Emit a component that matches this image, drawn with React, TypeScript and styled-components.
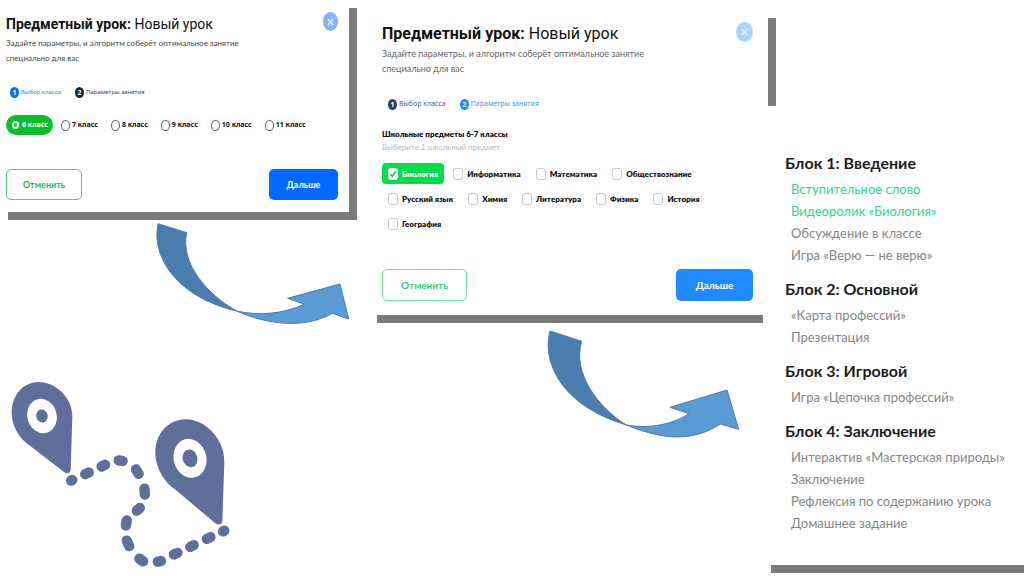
import React from 'react';
import styled, { createGlobalStyle } from 'styled-components';

const GlobalStyle = createGlobalStyle`
  *, *::before, *::after { box-sizing: border-box; }
  body { margin: 0; background: #fff; color: #111; font-family: Lato, "Liberation Sans", sans-serif; }
  h1, h2, p, ol, ul, fieldset { margin: 0; padding: 0; border: 0; list-style: none; }
  button, input { font-family: inherit; margin: 0; }
`;

type Size = { $large?: boolean };

const Slide = styled.main`
  display: grid;
  grid-template-columns: 369fr 394fr 261fr;
  align-items: start;
`;

const Column = styled.div`
  display: flex;
  flex-direction: column;
  min-width: 0;
`;

const Dialog = styled.section<Size>`
  display: flex;
  flex-direction: column;
  margin: ${p => (p.$large ? '10px -5px 0 0' : '0 20px 0 0')};
  padding: ${p => (p.$large ? '12px 15px 14px 13px' : '12px 11px 12px 6px')};
  background: #fff;
  box-shadow: 8px 8px 0 #7b7b7b;
`;

const DialogHead = styled.header`
  display: flex;
  justify-content: space-between;
  align-items: flex-start;
`;

const Title = styled.h1<Size>`
  font: 700 ${p => (p.$large ? 16 : 14)}px/24px Roboto, sans-serif;
  white-space: nowrap;
  span { font-weight: 400; }
`;

const CloseButton = styled.button<Size>`
  display: grid;
  place-items: center;
  width: ${p => (p.$large ? 17 : 15)}px;
  height: ${p => (p.$large ? 20 : 19)}px;
  padding: 0;
  border: 0;
  border-radius: 50%;
  background: ${p => (p.$large ? '#a6d7fb' : '#84b5fb')};
`;

const Lead = styled.p<Size>`
  max-width: ${p => (p.$large ? 280 : 250)}px;
  color: ${p => (p.$large ? '#666' : '#444')};
  font-size: ${p => (p.$large ? 9 : 8)}px;
  line-height: 15px;
`;

const Steps = styled.ol<Size>`
  display: flex;
  gap: 14px;
  margin-top: ${p => (p.$large ? 20 : 18)}px;
  padding-left: ${p => (p.$large ? 6 : 4)}px;
`;

const Step = styled.li<Size & { $color: string }>`
  display: flex;
  align-items: center;
  gap: 2px;
  height: 16px;
  color: ${p => p.$color};
  font: 400 ${p => (p.$large ? 7 : 6)}px/16px "Noto Sans", sans-serif;
  white-space: nowrap;
`;

const StepNumber = styled.span<{ $color: string }>`
  display: grid;
  place-items: center;
  width: 9px;
  height: 11px;
  border-radius: 50%;
  background: ${p => p.$color};
  color: #fff;
  font-weight: 700;
  font-size: 7px;
  line-height: 11px;
`;

const ClassList = styled.fieldset`
  display: flex;
  gap: 3px;
  margin-top: 15px;
`;

const ClassOption = styled.label`
  display: flex;
  align-items: center;
  gap: 2px;
  height: 20px;
  padding: 0 5px;
  border-radius: 10px;
  background: #fbfdff;
  font: 700 7px/20px "Noto Sans", sans-serif;
  white-space: nowrap;
  &:has(input:checked) { background: #0abf2c; color: #fff; }
`;

const Radio = styled.input`
  appearance: none;
  width: 9px;
  height: 11px;
  border: 1px solid #56616e;
  border-radius: 50%;
  background: #fff;
  &:checked {
    width: 7px;
    height: 8px;
    margin: 0 1px;
    border: 2px solid #fff;
    background: #0abf2c;
  }
`;

const GroupTitle = styled.h2`
  margin-top: 14px;
  font-size: 8px;
  font-weight: 800;
  line-height: 16px;
`;

const GroupHint = styled.p`
  color: #b9b9b9;
  font-size: 8px;
  line-height: 10px;
`;

const SubjectList = styled.fieldset`
  display: flex;
  flex-wrap: wrap;
  gap: 4px 3px;
  margin-top: 11px;
`;

const Subject = styled.label`
  display: flex;
  align-items: center;
  gap: 4px;
  height: 21px;
  padding: 0 6px;
  border-radius: 4px;
  font-size: 8px;
  font-weight: 800;
  white-space: nowrap;
  &:has(input:checked) { background: #07dc4c; color: #fff; }
`;

const Tick = styled.span`
  display: grid;
  place-items: center;
  input, svg { grid-area: 1 / 1; }
  svg { pointer-events: none; }
`;

const Checkbox = styled.input`
  appearance: none;
  width: 10px;
  height: 12px;
  border: 1px solid #c4c9d2;
  border-radius: 3px;
  background: #fff;
  &:checked { border-color: #fff; }
`;

const Actions = styled.footer<Size>`
  display: flex;
  justify-content: space-between;
  margin-top: ${p => (p.$large ? 35 : 34)}px;
`;

const ActionButton = styled.button<Size & { $primary?: boolean }>`
  width: ${p => (p.$primary ? (p.$large ? 77 : 69) : p.$large ? 85 : 76)}px;
  height: ${p => (p.$large ? 32 : 31)}px;
  padding: 0;
  border: ${p => (p.$primary ? '0' : `1px solid ${p.$large ? '#6fe3a4' : '#5cc58a'}`)};
  border-radius: 5px;
  background: ${p => (p.$primary ? (p.$large ? '#1f8bff' : '#0069ff') : '#fff')};
  color: ${p => (p.$primary ? '#fff' : p.$large ? '#18cf68' : '#12b04a')};
  font-size: ${p => (p.$large ? 10 : 9)}px;
  font-weight: ${p => (p.$primary ? 700 : 600)};
`;

const Arrow = styled.svg<Size>`
  align-self: flex-end;
  margin: ${p => (p.$large ? '10px 23px 0 0' : '8px 19px 0 0')};
`;

const Route = styled.svg`
  margin-top: 44px;
`;

const Plan = styled.aside`
  display: flex;
  flex-direction: column;
  gap: 12px;
  margin-top: 106px;
  padding: 46px 0 31px 22px;
  background: #fff;
  box-shadow: 8px 8px 0 #7b7b7b;
`;

const PlanTitle = styled.h2`
  margin-bottom: 4px;
  color: #1c1c1c;
  font-size: 16px;
  font-weight: 700;
  line-height: 22px;
`;

const PlanItem = styled.li<{ $done?: boolean }>`
  padding-left: 6px;
  color: ${p => (p.$done ? '#2bd992' : '#858585')};
  font-size: 13px;
  line-height: 22px;
  white-space: nowrap;
`;

const Cross = () => (
  <svg width="7" height="8" viewBox="0 0 7 8" fill="none" stroke="#fff" strokeWidth="1.2" aria-hidden="true">
    <path d="M.7 .8 6.3 7.2M6.3 .8.7 7.2" />
  </svg>
);

const steps = ['Выбор класса', 'Параметры занятия'];
const classes = [6, 7, 8, 9, 10, 11];
const subjects = ['Биология', 'Информатика', 'Математика', 'Обществознание', 'Русский язык', 'Химия', 'Литература', 'Физика', 'История', 'География'];
const plan = [
  { title: 'Блок 1: Введение', done: 2, items: ['Вступительное слово', 'Видеоролик «Биология»', 'Обсуждение в классе', 'Игра «Верю — не верю»'] },
  { title: 'Блок 2: Основной', done: 0, items: ['«Карта профессий»', 'Презентация'] },
  { title: 'Блок 3: Игровой', done: 0, items: ['Игра «Цепочка профессий»'] },
  { title: 'Блок 4: Заключение', done: 0, items: ['Интерактив «Мастерская природы»', 'Заключение', 'Рефлексия по содержанию урока', 'Домашнее задание'] },
];

// Centre, half length and angle of every dash along the route.
const dashes = [
  [215, 331, 2, -25], [261, 310, 6, -25], [310, 287, 6, -28], [362, 272, 6, 10], [412, 305, 8, 58],
  [434, 365, 9, 86], [415, 418, 6, -42], [379, 459, 8, -80], [384, 520, 9, 66], [424, 570, 7, 38],
  [478, 574, 5, -15], [527, 551, 6, -25], [576, 528, 6, -28], [626, 504, 6, -25], [671, 483, 2, -25],
];

type LessonProps = { large?: boolean; colors: string[]; numbers: string[]; children: React.ReactNode };

function LessonDialog({ large, colors, numbers, children }: LessonProps) {
  return (
    <Dialog $large={large}>
      <DialogHead>
        <Title $large={large}>Предметный урок: <span>Новый урок</span></Title>
        <CloseButton $large={large} type="button" aria-label="Закрыть"><Cross /></CloseButton>
      </DialogHead>
      <Lead $large={large}>Задайте параметры, и алгоритм соберёт оптимальное занятие специально для вас</Lead>
      <Steps $large={large}>
        {steps.map((name, i) => (
          <Step key={name} $large={large} $color={colors[i]}>
            <StepNumber $color={numbers[i]}>{i + 1}</StepNumber>{name}
          </Step>
        ))}
      </Steps>
      {children}
      <Actions $large={large}>
        <ActionButton $large={large} type="button">Отменить</ActionButton>
        <ActionButton $large={large} $primary type="button">Дальше</ActionButton>
      </Actions>
    </Dialog>
  );
}

export default function App() {
  return (
    <Slide>
      <GlobalStyle />
      <Column>
        <LessonDialog colors={['#3f7fe8', '#3c4350']} numbers={['#0a6cf5', '#13233f']}>
          <ClassList aria-label="Класс">
            {classes.map(n => (
              <ClassOption key={n}><Radio type="radio" name="class" defaultChecked={n === 6} />{n} класс</ClassOption>
            ))}
          </ClassList>
        </LessonDialog>
        <Arrow width="200" height="106" viewBox="0 0 200 106" stroke="#4f7ba6" strokeWidth="1" aria-hidden="true">
          <path fill="#4a7eaf" d="M8.3 3.7C1 32 22 76 86.7 91 58 75 30 44 36.7 12.7Z" />
          <path fill="#5b9bd5" d="M86.7 91C118 105 155 109 182.3 93.3L198.7 99 190 64 137.7 78.3 154.3 84.3C133 94 108 96 86.7 91Z" />
        </Arrow>
        <Route width="240" height="206" viewBox="0 0 720 618" fill="#5f6f9c" aria-hidden="true">
          <path d="M217 140C217 80 165 36 115 36 68 36 35 78 35 128 35 168 58 205 88 226L192 306Q208 316 212 300Z" />
          <ellipse cx="126" cy="138" rx="44" ry="52" transform="rotate(-15 126 138)" fill="#fff" />
          <ellipse cx="126" cy="138" rx="17" ry="20" transform="rotate(-15 126 138)" />
          <path d="M673 275C673 205 615 148 557 148 505 148 466 192 466 248 466 295 495 337 525 358L646 460Q664 470 667 452Z" />
          <ellipse cx="570" cy="265" rx="49" ry="59" transform="rotate(-15 570 265)" fill="#fff" />
          <ellipse cx="570" cy="265" rx="22" ry="27" transform="rotate(-15 570 265)" />
          <g stroke="#5f6f9c" strokeWidth="31" strokeLinecap="round">
            {dashes.map(([x, y, r, a]) => (
              <line key={`${x}-${y}`} x1={x - r} y1={y} x2={x + r} y2={y} transform={`rotate(${a} ${x} ${y})`} />
            ))}
          </g>
        </Route>
      </Column>
      <Column>
        <LessonDialog large colors={['#596273', '#3d9bf5']} numbers={['#2a4068', '#1c86f2']}>
          <GroupTitle>Школьные предметы 6-7 классы</GroupTitle>
          <GroupHint>Выберите 1 школьный предмет</GroupHint>
          <SubjectList aria-label="Школьные предметы">
            {subjects.map((name, i) => (
              <Subject key={name}>
                <Tick>
                  <Checkbox type="checkbox" defaultChecked={i === 0} />
                  {i === 0 && (
                    <svg width="8" height="8" viewBox="0 0 8 8" fill="none" stroke="#07c545" strokeWidth="1.5" aria-hidden="true">
                      <path d="M1.5 4.2 3.3 6.2 6.6 1.6" />
                    </svg>
                  )}
                </Tick>
                {name}
              </Subject>
            ))}
          </SubjectList>
        </LessonDialog>
        <Arrow $large width="200" height="118" viewBox="0 0 200 118" stroke="#4f7ba6" strokeWidth="1" aria-hidden="true">
          <path fill="#4a7eaf" d="M10 6C2 36 20 80 85.7 99.7 58 82 32 48 41.7 16.3Z" />
          <path fill="#5b9bd5" d="M85.7 99.7C118 113 150 119 180.3 99L198.7 104.3 187 65 130 82.3 149 88.7C130 101 105 104 85.7 99.7Z" />
        </Arrow>
      </Column>
      <Plan>
        {plan.map(block => (
          <section key={block.title}>
            <PlanTitle>{block.title}</PlanTitle>
            <ul>
              {block.items.map((item, i) => <PlanItem key={item} $done={i < block.done}>{item}</PlanItem>)}
            </ul>
          </section>
        ))}
      </Plan>
    </Slide>
  );
}
